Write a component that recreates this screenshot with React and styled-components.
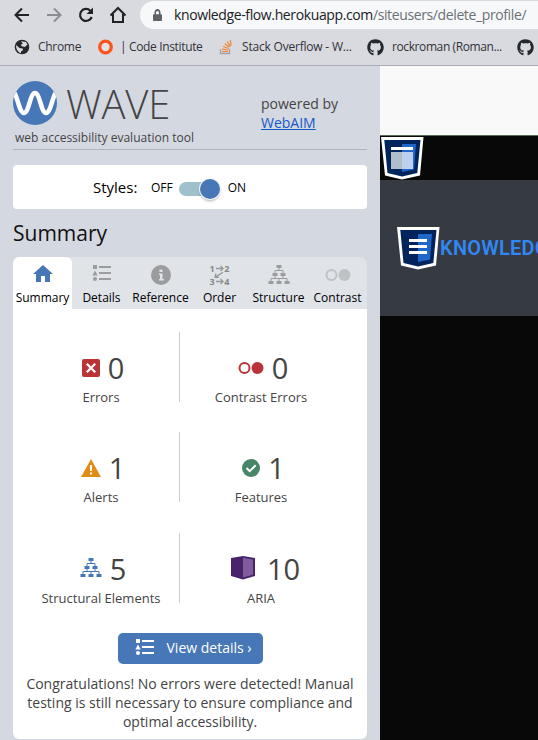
import React from "react";
import styled, { createGlobalStyle } from "styled-components";
import { FaGithub, FaLock } from "react-icons/fa";

const GlobalStyle = createGlobalStyle`
  * { box-sizing: border-box; }
  body { margin: 0; overflow: hidden; }
  svg { display: block; flex: none; }
`;

const Window = styled.div`
  width: 538px;
  height: 740px;
  overflow: hidden;
  display: flex;
  flex-direction: column;
  font-family: "Open Sans", sans-serif;
  color: #444;
`;
const Browser = styled.header`
  flex: none;
  height: 66px;
  background: #d9dae0;
  border-bottom: 1px solid #adaeb5;
  overflow: hidden;
`;
const NavBar = styled.div`
  height: 30px;
  display: flex;
  padding: 1px 0 1px 12px;
`;
const NavIcon = styled.div`
  width: 32px;
  height: 28px;
  display: flex;
  align-items: center;
  flex: none;
`;
const Address = styled.div`
  flex: 1;
  display: flex;
  align-items: center;
  padding-left: 13px;
  border-radius: 14px 0 0 14px;
  background: #f6f8fa;
`;
const Lock = styled(FaLock)`
  width: 9px;
  height: 12px;
  color: #5f6368;
`;
const Url = styled.span`
  margin-left: 12px;
  font-size: 14px;
  line-height: 28px;
  letter-spacing: -0.38px;
  white-space: nowrap;
  color: #202124;
`;
const Path = styled.span`
  color: #6c7075;
`;
const Bookmarks = styled.div`
  height: 35px;
  display: flex;
  align-items: center;
  padding: 0 0 1px 14px;
`;
const Bookmark = styled.div`
  width: ${(p) => p.$width}px;
  flex: none;
  display: flex;
  align-items: center;
  gap: ${(p) => p.$gap || 8}px;
`;
const BookmarkText = styled.span`
  font-size: 12px;
  line-height: 16px;
  letter-spacing: ${(p) => p.$spacing || 0}px;
  white-space: nowrap;
  color: #303238;
`;

const Main = styled.main`
  flex: 1;
  display: flex;
  min-height: 0;
`;
const Panel = styled.aside`
  width: 380px;
  flex: none;
  padding: 0 13px;
  background: #d4d8e0;
`;
const Brand = styled.div`
  height: 84px;
  display: flex;
  justify-content: space-between;
  border-bottom: 1px solid #b1b4b8;
`;
const BrandName = styled.div`
  padding-top: 15px;
`;
const LogoRow = styled.div`
  height: 44px;
  display: flex;
  align-items: center;
  gap: 9px;
`;
const Wordmark = styled.span`
  font-size: 40px;
  line-height: 44px;
  font-weight: 300;
  letter-spacing: -0.2px;
  padding-top: 1px;
`;
const Tagline = styled.div`
  padding: 4px 0 0 2px;
  font-size: 12px;
  line-height: 17px;
  white-space: nowrap;
`;
const Powered = styled.div`
  width: 106px;
  padding-top: 28px;
  font-size: 14px;
  line-height: 19px;
`;
const Link = styled.a`
  color: #1558c8;
  text-decoration: underline;
`;
const StylesBox = styled.div`
  height: 44px;
  margin-top: 15px;
  padding-left: 80px;
  display: flex;
  align-items: center;
  border-radius: 4px;
  background: #fff;
  color: #000;
  font-size: 12px;
`;
const StylesLabel = styled.span`
  width: 58px;
  font-size: 15px;
`;
const Switch = styled.div`
  width: 36px;
  height: 14px;
  margin: 4px 13px 0 6px;
  border-radius: 7px;
  background: #9fc1cc;
  display: flex;
  align-items: center;
  justify-content: flex-end;
`;
const Knob = styled.div`
  width: 20px;
  height: 20px;
  margin-right: -5px;
  flex: none;
  border-radius: 50%;
  background: #4777b7;
  box-shadow: 0 0 0 1px #f3f5f7, 0 2px 3px #0005;
`;
const Heading = styled.h1`
  height: 48px;
  margin: 0;
  padding-top: 9px;
  font-size: 21px;
  line-height: 30px;
  font-weight: 400;
  color: #111;
`;
const Tabs = styled.nav`
  height: 52px;
  display: grid;
  grid-template-columns: repeat(6, 59px);
  border-radius: 8px 8px 0 0;
  background: #e0e3e8;
`;
const Tab = styled.div`
  display: flex;
  flex-direction: column;
  align-items: center;
  border-radius: 6px 6px 0 0;
  background: ${(p) => (p.$active ? "#fff" : "transparent")};
`;
const TabIcon = styled.div`
  height: 32px;
  padding-top: ${(p) => p.$top}px;
`;
const TabLabel = styled.span`
  font-size: 12px;
  line-height: 17px;
  white-space: nowrap;
  color: #000;
`;
const Card = styled.section`
  height: 430px;
  padding: 23px 9px 0;
  display: flex;
  flex-direction: column;
  align-items: center;
  border-radius: 0 0 6px 6px;
  background: #fff;
`;
const Metrics = styled.div`
  align-self: flex-start;
  display: grid;
  grid-template-columns: 158px 162px;
  grid-auto-rows: 70px;
  row-gap: 30.4px;
`;
const Metric = styled.div`
  display: flex;
  flex-direction: column;
  align-items: center;
  padding-top: 17px;
  &:nth-child(odd) {
    padding-left: 1px;
    border-right: 1px solid #ccc;
  }
`;
const MetricValue = styled.div`
  height: 37px;
  display: flex;
  align-items: center;
  gap: ${(p) => p.$gap}px;
  font-size: 29px;
  line-height: 37px;
  margin-left: ${(p) => p.$shift || 0}px;
`;
const MetricLabel = styled.div`
  font-size: 13px;
  line-height: 18px;
  margin-top: 2px;
  white-space: nowrap;
`;
const DetailsButton = styled.button`
  width: 145px;
  height: 31px;
  margin: 30px 0 10px;
  padding: 0 0 1px 17px;
  border: 0;
  display: flex;
  align-items: center;
  gap: 12px;
  border-radius: 5px;
  background: #4777b7;
  color: #fff;
  font: 14px "Open Sans", sans-serif;
  white-space: nowrap;
`;
const Message = styled.p`
  margin: 0;
  font-size: 14px;
  line-height: 19px;
  text-align: center;
  white-space: nowrap;
`;

const Page = styled.div`
  flex: 1;
  min-width: 0;
  overflow: hidden;
  background: #080808;
`;
const BlankStrip = styled.div`
  height: 70px;
  background: #f9f9f9;
  border-bottom: 1px solid #5c6a59;
`;
const BlackStrip = styled.div`
  height: 44px;
  padding: 1px 0 0 1px;
`;
const Hero = styled.div`
  height: 136px;
  padding-left: 17px;
  display: flex;
  align-items: center;
  background: #363a42;
`;
const SiteName = styled.span`
  font-family: Roboto, sans-serif;
  font-size: 20px;
  font-weight: 600;
  letter-spacing: 0.2px;
  color: #3187f3;
  white-space: nowrap;
`;

const ListIcon = ({ color }) => (
  <svg width="20" height="17" viewBox="0 0 20 17" fill={color}>
    <path d="M1 0h4v4H1zM3 5.5l2.700 5H.3zM7 1h12v2H7zM7 7h12v2H7zM7 13h12v2H7z" />
    <circle cx="3" cy="14" r="2" />
  </svg>
);
const TreeIcon = ({ color }) => (
  <svg width="22" height="20" viewBox="0 0 22 20" fill={color}>
    <path d="M8.500 0h5v3h-5zM4.500 8h5v3h-5zM12.500 8h5v3h-5zM.5 16h5v3h-5zM8.500 16h5v3h-5zM16.500 16h5v3h-5z" />
    <path d="M11 3v2.500M7 8V5.500h8V8M7 11v2.500M15 11v2.500M3 16v-2.500h16V16M11 13.500V16" fill="none" stroke={color} />
  </svg>
);
const ContrastIcon = ({ color }) => (
  <svg width="26" height="12" viewBox="0 0 26 12">
    <circle cx="6.500" cy="6" r="5" fill="none" stroke={color} strokeWidth="2" />
    <circle cx="19.500" cy="6" r="6" fill={color} />
  </svg>
);
const HomeIcon = () => (
  <svg width="20" height="17" viewBox="0 0 20 17" fill="#4777b7">
    <path d="M10 0L20 9h-3v8h-5v-6H8v6H3V9H0z" />
  </svg>
);
const InfoIcon = () => (
  <svg width="20" height="20" viewBox="0 0 20 20">
    <circle cx="10" cy="10" r="10" fill="#9a9c9e" />
    <path d="M8.500 4.500h3v2.500h-3zM8 8.500h3.500V14H13v1.500H8V14h1v-4H8z" fill="#e0e3e8" />
  </svg>
);
const OrderBox = styled.div`
  width: 20px;
  height: 20px;
  display: grid;
  grid-template-rows: 7px 6px 7px;
  font-size: 9px;
  line-height: 7px;
  font-weight: 700;
  color: #85888a;
`;
const OrderLine = styled.div`
  display: flex;
  align-items: center;
  justify-content: space-between;
`;
const Arrow = () => (
  <svg width="8" height="7" viewBox="0 0 8 7" fill="none" stroke="#95989a" strokeWidth="1.300">
    <path d="M0 3.500h7M4.500 1L7 3.500 4.500 6" />
  </svg>
);
const OrderIcon = () => (
  <OrderBox>
    <OrderLine><span>1</span><Arrow /><span>2</span></OrderLine>
    <svg width="20" height="6" viewBox="0 0 20 6" fill="none" stroke="#95989a" strokeWidth="1.300">
      <path d="M13 .3L5 5.400M6 1.500L5 5.400h4" />
    </svg>
    <OrderLine><span>3</span><Arrow /><span>4</span></OrderLine>
  </OrderBox>
);
const ErrorIcon = () => (
  <svg width="18" height="18" viewBox="0 0 18 18">
    <rect width="18" height="18" rx="2" fill="#b93437" />
    <path d="M4.800 4.800l8.400 8.400M13.200 4.800l-8.400 8.400" stroke="#fff" strokeWidth="2.200" />
  </svg>
);
const AlertIcon = () => (
  <svg width="20" height="18" viewBox="0 0 20 18">
    <path d="M10 0l10 18H0z" fill="#e28c18" />
    <path d="M9 6h2v6H9zM9 13.500h2v2H9z" fill="#fff" />
  </svg>
);
const FeatureIcon = () => (
  <svg width="18" height="18" viewBox="0 0 18 18">
    <circle cx="9" cy="9" r="9" fill="#478666" />
    <path d="M4.500 9l3.200 3.200L13.700 6.300" fill="none" stroke="#fff" strokeWidth="2" />
  </svg>
);
const AriaIcon = () => (
  <svg width="24" height="24" viewBox="0 0 24 24">
    <path d="M0 2L12 0l12 2v18l-12 3.500L0 20z" fill="#48236b" />
    <path d="M12 1.800L22 3.500v15.200L12 21.500z" fill="#805b9d" />
  </svg>
);
const WaveLogo = () => (
  <svg width="44" height="44" viewBox="0 0 44 44">
    <clipPath id="disc"><circle cx="22" cy="22" r="22" /></clipPath>
    <circle cx="22" cy="22" r="22" fill="#4777b7" />
    <path clipPath="url(#disc)" d="M0 10C4 12 6 32 11 32S17 12 22 12s6 20 11 20 7-20 11-22" fill="none" stroke="#fff" strokeWidth="4.500" />
  </svg>
);
const Shield = ({ region }) => (
  <svg width="43" height="43" viewBox="0 0 43 43">
    <path d="M0 0h42.500L39 38.500 21 42.500 4 38.500z" fill="#fff" />
    <path d="M3.300 3H39.500l-3.200 33L21 39.500 6.500 36z" fill="#00245b" />
    <path d="M21 7H35L33 32.500 21 35z" fill="#2067ca" />
    {region ? (
      <>
        <path d="M10 10h22v3H10z" fill="#fff" />
        <path d="M10 15h11v17H10z" fill="#b2bdcb" />
        <path d="M21 15h11v17H21z" fill="#bbd1ef" />
      </>
    ) : (
      <path d="M12 12h18v3H12zM12 18h18v3H12zM12 24h18v3H12z" fill="#fff" />
    )}
  </svg>
);
const Back = () => (
  <svg width="20" height="18" viewBox="0 0 20 18" fill="none" stroke="#202124" strokeWidth="2">
    <path d="M17 9H4M10 2.500L3.500 9l6.500 6.500" />
  </svg>
);
const Forward = () => (
  <svg width="20" height="18" viewBox="0 0 20 18" fill="none" stroke="#8c8d92" strokeWidth="2">
    <path d="M3 9h13M10 2.500L16.500 9 10 15.500" />
  </svg>
);
const Reload = () => (
  <svg width="20" height="18" viewBox="0 0 20 18">
    <path d="M14.300 4.700A6 6 0 1 0 15.700 11" fill="none" stroke="#202124" strokeWidth="2.200" />
    <path d="M17 1.500v6.500h-6.500z" fill="#202124" />
  </svg>
);
const Home = () => (
  <svg width="20" height="18" viewBox="0 0 20 18" fill="none" stroke="#202124" strokeWidth="2">
    <path d="M2.500 9.500L10 2l7.500 7.500M5 8v8h10V8" />
  </svg>
);
const Globe = () => (
  <svg width="16" height="16" viewBox="0 0 16 16">
    <circle cx="8" cy="8" r="7.300" fill="#25272b" />
    <path d="M7 2.300l5 .8 1.500 2.500-2.700 2.500-3-.8-1-1.500 2-1zM2 6l3.500 3 3 .4.700 1.700-2 1.200-.4 2C4 13 2 10.500 2 6z" fill="#d9dae0" />
  </svg>
);
const Ring = () => (
  <svg width="16" height="16" viewBox="0 0 16 16">
    <circle cx="8.500" cy="8" r="5.800" fill="#e5e4e5" stroke="#fb531d" strokeWidth="3.300" />
  </svg>
);
const Stack = () => (
  <svg width="14" height="16" viewBox="0 0 14 16" fill="none">
    <path d="M1.500 10v4.500h9V10" stroke="#a1a2a5" strokeWidth="1.300" />
    <path d="M3 12.500h6M3.200 10.200l6 .8M4 7.500l5.800 2M5.700 4.700L10.500 8M8.200 2.500l3.200 4.800M11.200 1l1 5.500" stroke="#f18332" strokeWidth="1.200" />
  </svg>
);

const tabs = [
  ["Summary", <HomeIcon />, 8],
  ["Details", <ListIcon color="#9a9c9e" />, 8],
  ["Reference", <InfoIcon />, 8],
  ["Order", <OrderIcon />, 8],
  ["Structure", <TreeIcon color="#9a9c9e" />, 8],
  ["Contrast", <ContrastIcon color="#bfc2c5" />, 12],
];
const metrics = [
  ["Errors", <ErrorIcon />, 0, 8, 4],
  ["Contrast Errors", <ContrastIcon color="#b93437" />, 0, 8, 4],
  ["Alerts", <AlertIcon />, 1, 8, 4],
  ["Features", <FeatureIcon />, 1, 8, 5],
  ["Structural Elements", <TreeIcon color="#4777b7" />, 5, 8, 4],
  ["ARIA", <AriaIcon />, 10, 12, 9],
];

export default function App() {
  return (
    <Window>
      <GlobalStyle />
      <Browser>
        <NavBar>
          <NavIcon><Back /></NavIcon>
          <NavIcon><Forward /></NavIcon>
          <NavIcon><Reload /></NavIcon>
          <NavIcon><Home /></NavIcon>
          <Address>
            <Lock preserveAspectRatio="none" />
            <Url>knowledge-flow.herokuapp.com<Path>/siteusers/delete_profile/</Path></Url>
          </Address>
        </NavBar>
        <Bookmarks>
          <Bookmark $width={83}><Globe /><BookmarkText $spacing={-0.3}>Chrome</BookmarkText></Bookmark>
          <Bookmark $width={122} $gap={7}><Ring /><BookmarkText $spacing={-0.35}>| Code Institute</BookmarkText></Bookmark>
          <Bookmark $width={148} $gap={9}><Stack /><BookmarkText $spacing={-0.2}>Stack Overflow - W...</BookmarkText></Bookmark>
          <Bookmark $width={150}><FaGithub size={17} color="#24292e" /><BookmarkText $spacing={-0.4}>rockroman (Roman...</BookmarkText></Bookmark>
          <FaGithub size={17} color="#24292e" />
        </Bookmarks>
      </Browser>
      <Main>
        <Panel>
          <Brand>
            <BrandName>
              <LogoRow><WaveLogo /><Wordmark>WAVE</Wordmark></LogoRow>
              <Tagline>web accessibility evaluation tool</Tagline>
            </BrandName>
            <Powered>powered by<br /><Link>WebAIM</Link></Powered>
          </Brand>
          <StylesBox>
            <StylesLabel>Styles:</StylesLabel>
            <span>OFF</span>
            <Switch><Knob /></Switch>
            <span>ON</span>
          </StylesBox>
          <Heading>Summary</Heading>
          <Tabs>
            {tabs.map(([label, icon, top], i) => (
              <Tab key={label} $active={i === 0}>
                <TabIcon $top={top}>{icon}</TabIcon>
                <TabLabel>{label}</TabLabel>
              </Tab>
            ))}
          </Tabs>
          <Card>
            <Metrics>
              {metrics.map(([label, icon, value, gap, shift]) => (
                <Metric key={label}>
                  <MetricValue $gap={gap} $shift={shift}>{icon}<span>{value}</span></MetricValue>
                  <MetricLabel>{label}</MetricLabel>
                </Metric>
              ))}
            </Metrics>
            <DetailsButton><ListIcon color="#fff" />View details ›</DetailsButton>
            <Message>
              Congratulations! No errors were detected! Manual<br />
              testing is still necessary to ensure compliance and<br />
              optimal accessibility.
            </Message>
          </Card>
        </Panel>
        <Page>
          <BlankStrip />
          <BlackStrip><Shield region /></BlackStrip>
          <Hero><Shield /><SiteName>KNOWLEDGE</SiteName></Hero>
        </Page>
      </Main>
    </Window>
  );
}
